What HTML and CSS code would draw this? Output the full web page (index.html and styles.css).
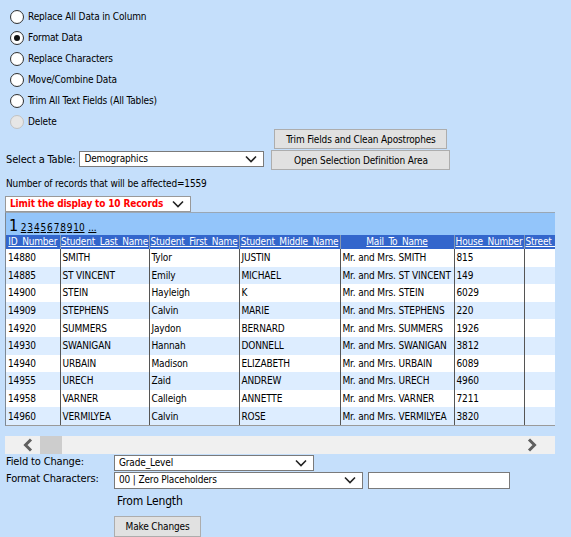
FILE: index.html
```html
<!DOCTYPE html>
<html lang="en">
<head>
    <meta charset="UTF-8">
    <title>Update Data</title>
    <link rel="stylesheet" href="styles.css">
</head>
<body>
    <div class="page">
        <div class="actions">
            <label class="action"><input type="radio" name="action"> Replace All Data in Column</label>
            <label class="action"><input type="radio" name="action" checked> Format Data</label>
            <label class="action"><input type="radio" name="action"> Replace Characters</label>
            <label class="action"><input type="radio" name="action"> Move/Combine Data</label>
            <label class="action"><input type="radio" name="action"> Trim All Text Fields (All Tables)</label>
            <label class="action"><input type="radio" name="action" disabled> Delete</label>
        </div>

        <div class="table-row">
            <div class="table-pick">
                <span>Select a Table:</span>
                <div class="dropdown table-select">
                    <select><option>Demographics</option></select>
                    <svg class="chev" width="12" height="8" viewBox="0 0 12 8"><path d="M1 1.5 L6 6.5 L11 1.5" fill="none" stroke="#222" stroke-width="1.6"/></svg>
                </div>
            </div>
            <div class="btn-stack">
                <button class="btn btn-trim">Trim Fields and Clean Apostrophes</button>
                <button class="btn btn-open">Open Selection Definition Area</button>
            </div>
        </div>

        <div class="count">Number of records that will be affected=1559</div>

        <div class="dropdown limit-select">
            <select><option>Limit the display to 10 Records</option></select>
            <svg class="chev" width="12" height="8" viewBox="0 0 12 8"><path d="M1 1.5 L6 6.5 L11 1.5" fill="none" stroke="#222" stroke-width="1.6"/></svg>
        </div>

        <div class="grid-wrap">
            <table class="grid">
                <colgroup>
                    <col style="width:54px"><col style="width:89px"><col style="width:90px"><col style="width:101px"><col style="width:114px"><col style="width:70px"><col style="width:80px">
                </colgroup>
                <thead>
                    <tr class="pager">
                        <td colspan="7"><span class="cur">1</span> <a>2</a><a>3</a><a>4</a><a>5</a><a>6</a><a>7</a><a>8</a><a>9</a><a>10</a> <a>...</a></td>
                    </tr>
                    <tr class="head">
                        <th><a>ID Number</a></th>
                        <th><a>Student Last Name</a></th>
                        <th><a>Student First Name</a></th>
                        <th><a>Student Middle Name</a></th>
                        <th><a>Mail To Name</a></th>
                        <th><a>House Number</a></th>
                        <th class="left"><a>Street Name</a></th>
                    </tr>
                </thead>
                <tbody>
                    <tr><td>14880</td><td>SMITH</td><td>Tylor</td><td>JUSTIN</td><td>Mr. and Mrs. SMITH</td><td>815</td><td></td></tr>
                    <tr><td>14885</td><td>ST VINCENT</td><td>Emily</td><td>MICHAEL</td><td>Mr. and Mrs. ST VINCENT</td><td>149</td><td></td></tr>
                    <tr><td>14900</td><td>STEIN</td><td>Hayleigh</td><td>K</td><td>Mr. and Mrs. STEIN</td><td>6029</td><td></td></tr>
                    <tr><td>14909</td><td>STEPHENS</td><td>Calvin</td><td>MARIE</td><td>Mr. and Mrs. STEPHENS</td><td>220</td><td></td></tr>
                    <tr><td>14920</td><td>SUMMERS</td><td>Jaydon</td><td>BERNARD</td><td>Mr. and Mrs. SUMMERS</td><td>1926</td><td></td></tr>
                    <tr><td>14930</td><td>SWANIGAN</td><td>Hannah</td><td>DONNELL</td><td>Mr. and Mrs. SWANIGAN</td><td>3812</td><td></td></tr>
                    <tr><td>14940</td><td>URBAIN</td><td>Madison</td><td>ELIZABETH</td><td>Mr. and Mrs. URBAIN</td><td>6089</td><td></td></tr>
                    <tr><td>14955</td><td>URECH</td><td>Zaid</td><td>ANDREW</td><td>Mr. and Mrs. URECH</td><td>4960</td><td></td></tr>
                    <tr><td>14958</td><td>VARNER</td><td>Calleigh</td><td>ANNETTE</td><td>Mr. and Mrs. VARNER</td><td>7211</td><td></td></tr>
                    <tr><td>14960</td><td>VERMILYEA</td><td>Calvin</td><td>ROSE</td><td>Mr. and Mrs. VERMILYEA</td><td>3820</td><td></td></tr>
                </tbody>
            </table>
        </div>

        <div class="hscroll">
            <svg class="arrow" width="12" height="14" viewBox="0 0 12 14"><path d="M9 1.5 L3.5 7 L9 12.5" fill="none" stroke="#606060" stroke-width="3"/></svg>
            <div class="thumb"></div>
            <div class="track"></div>
            <svg class="arrow" width="12" height="14" viewBox="0 0 12 14"><path d="M3 1.5 L8.5 7 L3 12.5" fill="none" stroke="#606060" stroke-width="3"/></svg>
        </div>

        <div class="change-form">
            <span class="lbl">Field to Change:</span>
            <div class="dropdown field-select">
                <select><option>Grade_Level</option></select>
                <svg class="chev" width="12" height="8" viewBox="0 0 12 8"><path d="M1 1.5 L6 6.5 L11 1.5" fill="none" stroke="#222" stroke-width="1.6"/></svg>
            </div>

            <span class="lbl">Format Characters:</span>
            <div class="format-row">
                <div class="dropdown format-select">
                    <select><option>00 | Zero Placeholders</option></select>
                    <svg class="chev" width="12" height="8" viewBox="0 0 12 8"><path d="M1 1.5 L6 6.5 L11 1.5" fill="none" stroke="#222" stroke-width="1.6"/></svg>
                </div>
                <input type="text" class="format-text">
            </div>

            <span></span>
            <div class="from-length">From Length</div>

            <span></span>
            <div><button class="btn btn-make">Make Changes</button></div>
        </div>
    </div>
</body>
</html>
```

FILE: styles.css
```css
html, body {
    margin: 0;
    background-color: #c5dffb;
}

body {
    font-family: "DejaVu Sans Condensed", "Liberation Sans", sans-serif;
    font-size: 10px;
    letter-spacing: -0.15px;
    color: #000;
}

.page {
    width: 571px;
    height: 537px;
    padding: 6px 0 0 0;
    box-sizing: border-box;
}

/* radio list */
.actions {
    display: flex;
    flex-direction: column;
    padding-left: 10px;
}

.action {
    display: flex;
    align-items: center;
    height: 21px;
    gap: 4px;
}

.action input {
    appearance: none;
    -webkit-appearance: none;
    margin: 0;
    width: 14px;
    height: 14px;
    border: 1px solid #333;
    border-radius: 50%;
    background: radial-gradient(circle, #fff 55%, #e8e8e8 100%);
    box-sizing: border-box;
    display: grid;
    place-items: center;
}

.action input:checked::after {
    content: "";
    width: 6px;
    height: 6px;
    border-radius: 50%;
    background-color: #111;
}

.action input:disabled {
    border-color: #c2c2c2;
    background: #e6e6e6;
}

/* table picker + buttons */
.table-row {
    display: flex;
    align-items: flex-end;
    margin-top: -3px;
    padding-left: 6px;
}

.table-pick {
    display: flex;
    align-items: center;
    gap: 4px;
    margin-bottom: 3px;
    font-size: 11px;
}

.btn-stack {
    display: flex;
    flex-direction: column;
    align-items: center;
    margin-left: 7px;
    gap: 1px;
}

.btn {
    font-family: inherit;
    font-size: 10px;
    letter-spacing: -0.15px;
    background-color: #e1e1e1;
    border: 1px solid #adadad;
    border-radius: 0;
    color: #000;
    padding: 0;
    cursor: pointer;
}

.btn-trim {
    width: 173px;
    height: 20px;
}

.btn-open {
    width: 179px;
    height: 20px;
}

.btn-make {
    width: 87px;
    height: 21px;
}

/* fake native dropdowns */
.dropdown {
    position: relative;
    display: inline-block;
}

.dropdown select {
    appearance: none;
    -webkit-appearance: none;
    display: block;
    width: 100%;
    height: 16px;
    line-height: 14px;
    margin: 0;
    padding: 0 0 0 4px;
    border: 1px solid #7a7a7a;
    border-radius: 0;
    background-color: #fff;
    font-family: inherit;
    font-size: 10px;
    letter-spacing: -0.15px;
    color: #000;
}

.dropdown .chev {
    position: absolute;
    right: 7px;
    top: 4px;
    pointer-events: none;
}

.table-select {
    width: 185px;
}

.count {
    margin: 7px 0 0 6px;
    height: 13px;
    line-height: 13px;
}

.limit-select {
    display: block;
    width: 186px;
    margin: 6px 0 0 5px;
}

.limit-select select {
    color: #f00;
    font-weight: bold;
    border-color: #999;
}

/* data grid */
.grid-wrap {
    width: 550px;
    margin-left: 5px;
    overflow: hidden;
    border-top: 1px solid #9aa7b4;
    border-left: 1px solid #7d8894;
    border-bottom: 1px solid #9a9a9a;
    box-sizing: border-box;
}

.grid {
    table-layout: fixed;
    width: 598px;
    border-collapse: collapse;
    font-size: 10px;
}

.grid td, .grid th {
    padding: 0 0 0 2px;
    white-space: nowrap;
    overflow: hidden;
}

.grid tbody tr {
    height: 17.6px;
    background-color: #fff;
}

.grid tbody tr:nth-child(even) {
    background-color: #ddedff;
}

.grid tbody td + td {
    border-left: 1px solid #555;
}

.pager {
    height: 22px;
    background-color: #93c5fa;
}

.pager td {
    padding: 2px 0 0 3px;
    vertical-align: middle;
}

.pager .cur {
    font-size: 16px;
}

.pager a {
    color: #000;
    text-decoration: underline;
    margin-right: 1px;
    font-size: 10px;
}

.head {
    height: 14px;
    background-color: #3366cc;
}

.head th {
    padding: 0;
    font-weight: normal;
    text-align: center;
    border-left: 1px solid #8797b0;
    line-height: 12px;
    letter-spacing: -0.2px;
    word-spacing: 2px;
}

.head th:first-child {
    border-left: none;
}

.head th.left {
    text-align: left;
    padding-left: 1px;
}

.head a {
    color: #fff;
    text-decoration: underline;
}

/* horizontal scroller */
.hscroll {
    display: flex;
    align-items: center;
    width: 550px;
    height: 18px;
    margin: 10px 0 0 5px;
    background-color: #f0f0f0;
}

.hscroll .arrow {
    margin: 0 10px 0 17px;
}

.hscroll .arrow:last-child {
    margin: 0 17px 0 0;
}

.thumb {
    width: 22px;
    height: 18px;
    background-color: #cdcdcd;
    margin-left: -4px;
}

.track {
    flex: 1;
}

/* bottom form */
.change-form {
    display: grid;
    grid-template-columns: 108px auto;
    row-gap: 1px;
    margin: 1px 0 0 6px;
    font-size: 11px;
}

.lbl {
    line-height: 14px;
}

.field-select {
    width: 200px;
}

.format-row {
    display: flex;
    gap: 5px;
}

.format-select {
    width: 249px;
}

.format-select select {
    height: 17px;
}

.format-text {
    width: 142px;
    height: 17px;
    margin: 0;
    border: 1px solid #7a7a7a;
    box-sizing: border-box;
    padding: 0;
}

.from-length {
    font-size: 12px;
    padding: 4px 0 0 3px;
    height: 21px;
}
```
